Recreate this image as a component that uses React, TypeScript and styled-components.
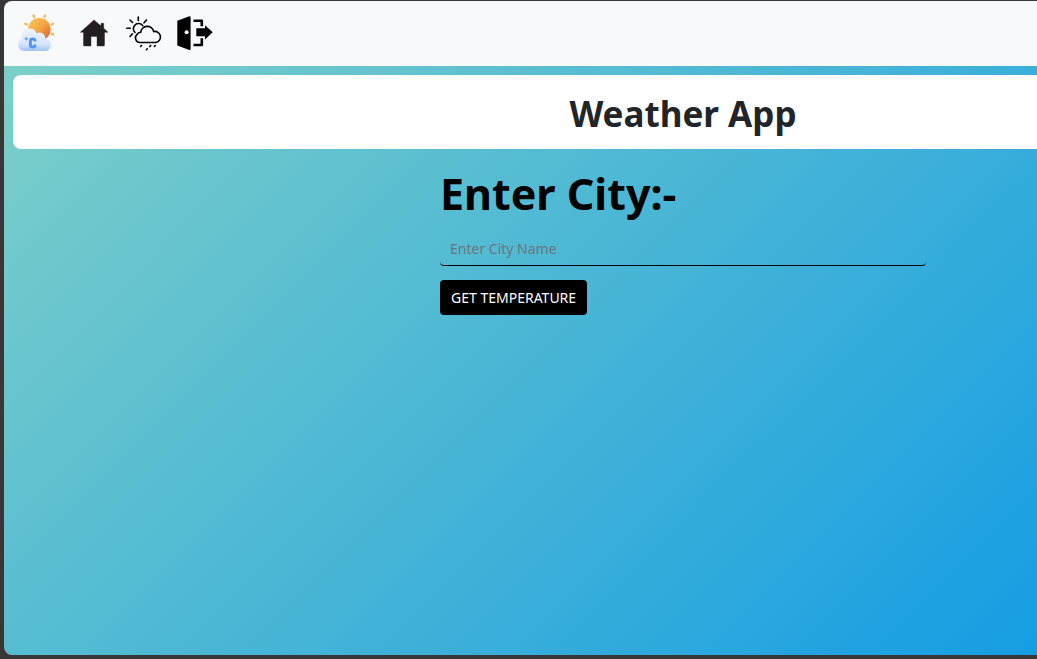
import React from "react";
import styled, { createGlobalStyle } from "styled-components";

const GlobalStyle = createGlobalStyle`
  *, *::before, *::after { box-sizing: border-box; }
  html { background: #383636; }
  body {
    margin: 0;
    font-family: "Noto Sans", "Open Sans", sans-serif;
    color: #212529;
  }
`;

const Frame = styled.div`
  display: flex;
  min-height: 100vh;
  padding: 1px 0 4px 4px;
`;

const Page = styled.div`
  flex: 1;
  min-width: 0;
  display: flex;
  flex-direction: column;
  border-radius: 8px 0 0 8px;
  overflow: hidden;
`;

const Navbar = styled.nav`
  display: flex;
  gap: 14px;
  padding: 15px 14px 14px;
  background: #f8f9fa;
`;

const NavLink = styled.a<{ $brand?: boolean }>`
  display: block;
  width: 36px;
  height: 36px;
  margin-right: ${({ $brand }) => ($brand ? "8px" : "0")};
  color: #000;
`;

const Icon = styled.svg`
  display: block;
  width: 100%;
  height: 100%;
  overflow: visible;
`;

const Main = styled.main`
  flex: 1;
  padding: 9px 0 9px 9px;
  background: linear-gradient(135deg, #7dcfc8 0%, #0093e9 120%);
`;

const Banner = styled.header`
  padding: 14px 0 10px 316px;
  border-radius: 8px 0 0 8px;
  background: #fff;
  text-align: center;
`;

const Title = styled.h1`
  margin: 0;
  font-size: 35px;
  line-height: 50px;
  font-weight: 700;
`;

const Content = styled.section`
  display: flex;
  justify-content: center;
  padding: 17px 0 0 316px;
`;

const Form = styled.form`
  width: 100%;
  max-width: 486px;
  display: flex;
  flex-direction: column;
  align-items: flex-start;
`;

const Label = styled.label`
  font-size: 43px;
  line-height: 56px;
  font-weight: 700;
  color: #000;
`;

const CityInput = styled.input`
  width: 100%;
  height: 34px;
  margin: 10px 0 14px;
  padding: 0 10px;
  border: 0;
  border-bottom: 1px solid #000;
  border-radius: 4px;
  outline: 0;
  background: transparent;
  font: 400 14px/20px "Noto Sans", sans-serif;

  &::placeholder { color: #6c757d; opacity: 1; }
`;

const SubmitButton = styled.button`
  height: 35px;
  padding: 0 11px;
  border: 0;
  border-radius: 4px;
  background: #000;
  color: #fff;
  font: 400 14px/20px "Noto Sans", sans-serif;
  text-transform: uppercase;
`;

const BrandIcon = () => (
  <Icon viewBox="0 0 36 36" aria-hidden="true">
    <defs>
      <linearGradient id="sun" x1="0" y1="0" x2="1" y2="1">
        <stop offset="0" stopColor="#fbca55" />
        <stop offset=".5" stopColor="#f3a542" />
        <stop offset="1" stopColor="#d95530" />
      </linearGradient>
      <linearGradient id="cloud" x1="0" y1="0" x2="0" y2="1">
        <stop offset="0" stopColor="#eef4ff" />
        <stop offset=".7" stopColor="#d5e4fd" />
        <stop offset="1" stopColor="#a3c2f2" />
      </linearGradient>
    </defs>
    <path d="M15.500-.5l.6 1.500M27-.5l-.6 1.500M33.700 8.500l1.600-.7M33.700 17.800l1.600.7M8.800 8.500l-1.600-.7" stroke="#f5b550" strokeWidth="2.200" strokeLinecap="round" />
    <circle cx="21.300" cy="13.300" r="11.300" fill="url(#sun)" />
    <path d="M6 35A6.200 6.200 0 0 1 3.500 23.300V20A8 8 0 0 1 18.800 17.400 5.800 5.800 0 0 1 27.400 22.700 6.200 6.200 0 0 1 27.500 35z" fill="url(#cloud)" />
    <circle cx="8.300" cy="22.800" r="1.200" fill="#8fbef8" stroke="#62a5f5" strokeWidth="1" />
    <path d="M17 25.600v-.8q0-2-2.300-2t-2.300 2V29q0 2.200 2.300 2.200T17 29v-.6" fill="none" stroke="#4d94f7" strokeWidth="2.800" />
  </Icon>
);

const HomeIcon = () => (
  <Icon viewBox="0 0 36 36" aria-hidden="true">
    <path d="M18 3.900L4.300 16.300H7.500V29q0 1 1 1H15V20.500h6V30h6.500q1 0 1-1V16.300H32L27.700 12.300V7.300H25V10z" fill="#231f20" stroke="#231f20" strokeWidth=".4" strokeLinejoin="round" />
  </Icon>
);

const WeatherIcon = () => (
  <Icon viewBox="0 0 36 36" fill="none" stroke="currentColor" strokeWidth="1.600" strokeLinecap="round" aria-hidden="true">
    <path d="M12.300 1v3.500M4 4l2.500 2.500M20.500 4L18 6.800M.8 12.300h3.500M4 20.500l2.500-2.700M9 16.500A5.200 5.200 0 1 1 16.800 9.700" />
    <path d="M14.500 26.500A4.600 4.600 0 0 1 11 18.500 4.300 4.300 0 0 1 14.700 16.300 6.600 6.600 0 0 1 27.700 15.500 5.600 5.600 0 1 1 30 26.500z" />
    <path d="M15.600 29.500l-.9.900M24.700 29.500l-.9.900M29.300 29.500l-.9.900M21.300 32.800l-.9.900" />
  </Icon>
);

const ExitIcon = () => (
  <Icon viewBox="0 0 36 36" aria-hidden="true">
    <path d="M1.300 4.800L12.600.5q2-.7 2 1.200v31q0 1.800-2 1.100L1.300 29.500z" fill="currentColor" />
    <circle cx="10.600" cy="16.300" r="2" fill="#f8f9fa" />
    <path d="M17.500 4.800h8.300v5.400M17.500 29h8.300v-6.800" fill="none" stroke="currentColor" strokeWidth="2.600" strokeLinejoin="round" />
    <path d="M20.300 12.300H29V9.200L36.700 16.300 29 23.500v-3.200H20.300z" fill="currentColor" />
  </Icon>
);

export default function App() {
  return (
    <Frame>
      <GlobalStyle />
      <Page>
        <Navbar>
          <NavLink $brand href="#" aria-label="Weather App"><BrandIcon /></NavLink>
          <NavLink href="#home" aria-label="Home"><HomeIcon /></NavLink>
          <NavLink href="#weather" aria-label="Weather"><WeatherIcon /></NavLink>
          <NavLink href="#logout" aria-label="Log out"><ExitIcon /></NavLink>
        </Navbar>
        <Main>
          <Banner>
            <Title>Weather App</Title>
          </Banner>
          <Content>
            <Form onSubmit={(event) => event.preventDefault()}>
              <Label htmlFor="city">Enter City:-</Label>
              <CityInput id="city" type="text" placeholder="Enter City Name" />
              <SubmitButton type="submit">Get Temperature</SubmitButton>
            </Form>
          </Content>
        </Main>
      </Page>
    </Frame>
  );
}
